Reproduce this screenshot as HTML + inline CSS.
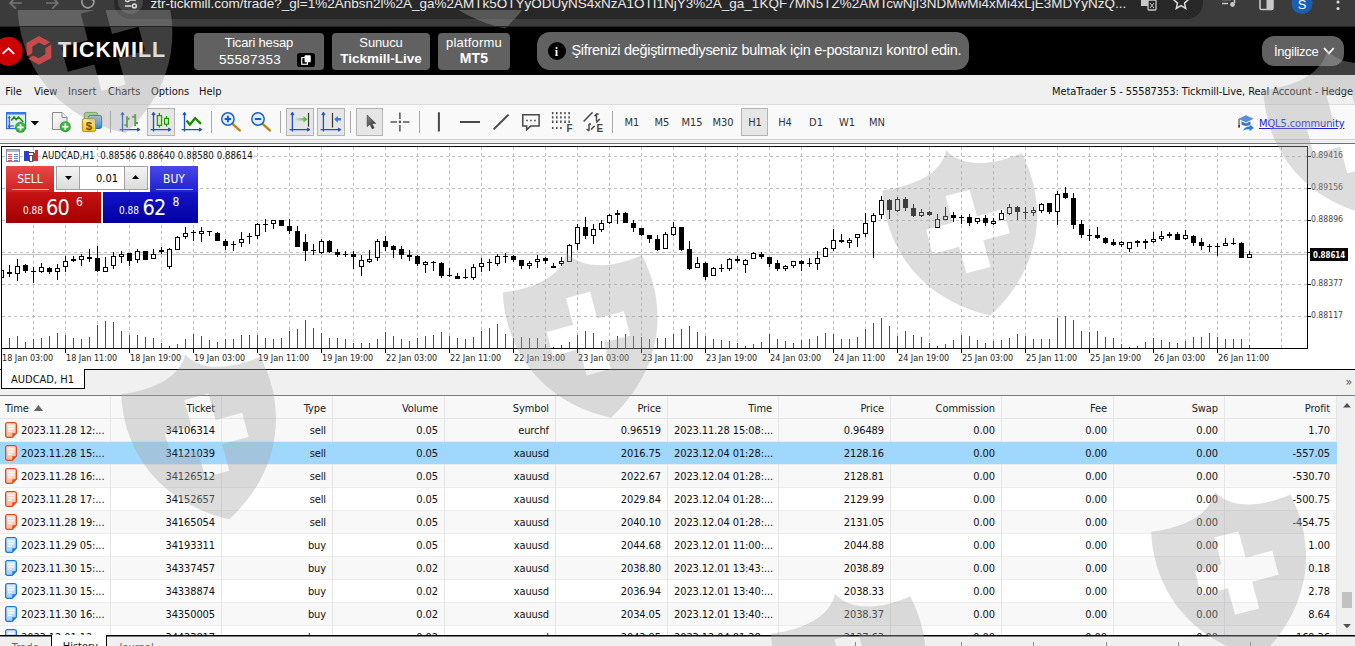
<!DOCTYPE html><html><head><meta charset="utf-8"><title>Tickmill MetaTrader 5</title><style>
*{box-sizing:border-box}
html,body{margin:0;padding:0}
body{width:1355px;height:646px;overflow:hidden;position:relative;background:#fff;font-family:'DejaVu Sans Condensed','Liberation Sans',sans-serif;font-size:11px;color:#000}
.abs{position:absolute}
.t{position:absolute;white-space:nowrap;line-height:1}
#chrome{left:0;top:0;width:1355px;height:26px;background:#3b3b3b;overflow:hidden}
#url{left:114px;top:-14px;width:1089px;height:33px;border-radius:17px;background:#282828}
#hdr{left:0;top:26px;width:1355px;height:49px;background:#000;font-family:'Liberation Sans',sans-serif;color:#fff}
.hbox{position:absolute;top:7px;height:37px;background:#616161;border-radius:4px;text-align:center;color:#fff}
.hbox div{position:absolute;left:0;right:0;white-space:nowrap;line-height:1}
#menu{left:0;top:75px;width:1355px;height:30px;background:#f0f0f0;border-bottom:1px solid #dcdcdc}
#tb{left:0;top:105px;width:1355px;height:35px;background:#f9f9f9;border-bottom:1px solid #d0d0d0}
.sep{position:absolute;top:6px;width:1px;height:22px;background:#a8a8a8}
.btnsel{position:absolute;top:3px;height:28px;background:#e6e6e6;border:1px solid #b4b4b4}
.tf{position:absolute;top:0;height:35px;line-height:35px;text-align:center;font-size:11px;color:#333}
</style></head><body>
<div id="chrome" class="abs">
<div id="url" class="abs"></div>
<div class="abs" style="left:118px;top:-11px;width:25.4px;height:25.4px;border-radius:13px;background:#454545"></div>
<svg class="abs" style="left:0;top:0" width="1355" height="26" viewBox="0 0 1355 26"><g fill="none" stroke="#757575" stroke-width="1.7"><path d="M15.8 -2.8 L10.2 3 L15.8 8.6 M10.6 3 H21.8"/><path d="M52.2 -2.8 L57.8 3 L52.2 8.6 M57.4 3 H46"/><path d="M93.6 0 A6 6 0 1 1 88 -4.2" stroke="#9a9a9a"/></g><path d="M90.6 -0.6 h3.600 v-3.400 z M90.600 -0.600 h3.600 v3.200 z" fill="#9a9a9a"/><g stroke="#dcdcdc" stroke-width="1.5" fill="none"><path d="M130 0 h6 M125 5.9 h6.4"/><circle cx="127.4" cy="-0.2" r="1.9"/><circle cx="134.4" cy="5.9" r="1.9"/></g><g><rect x="1141" y="-4" width="9" height="10" fill="#c8c8c8"/><rect x="1148" y="0" width="8" height="10" rx="1" fill="#282828" stroke="#c8c8c8" stroke-width="1.3"/><path d="M1150 3 l4 5 M1154 3 l-4 5" stroke="#c8c8c8" stroke-width="1"/></g><path d="M1181 -6 l2.2 5 5.3 .5 -4 3.6 1.2 5.3 -4.7 -2.8 -4.7 2.8 1.2 -5.3 -4 -3.6 5.3 -.5z" fill="none" stroke="#dcdcdc" stroke-width="1.5"/><g stroke="#c8c8c8" stroke-width="1.6" fill="none"><path d="M1222 -0.5 h9 M1222 3.5 h6"/><path d="M1234.5 -6 v9"/></g><circle cx="1232.5" cy="4.5" r="2.4" fill="#c8c8c8"/><g><rect x="1260" y="-6" width="13" height="15.5" rx="1.5" fill="none" stroke="#c8c8c8" stroke-width="1.6"/><rect x="1266.5" y="-6" width="6.5" height="15" fill="#c8c8c8"/></g><circle cx="1302" cy="3.5" r="10.5" fill="#1a5fb4"/><circle cx="1338" cy="2" r="1.5" fill="#dcdcdc"/><circle cx="1338" cy="8.5" r="1.5" fill="#dcdcdc"/></svg>
<div class="t" style="left:150.5px;top:-4.4px;font:13.5px 'Liberation Sans',sans-serif;color:#e8e8e8;letter-spacing:0px" id="urltext">ztr-tickmill.com/trade?_gl=1%2Anbsn2l%2A_ga%2AMTk5OTYyODUyNS4xNzA1OTI1NjY3%2A_ga_1KQF7MN5TZ%2AMTcwNjI3NDMwMi4xMi4xLjE3MDYyNzQ...</div>
<div class="t" style="left:1297px;top:-3px;width:10px;text-align:center;font:13px 'Liberation Sans',sans-serif;color:#fff">S</div>
</div>
<div class="abs" style="left:0;top:26px;width:1355px;height:1px;background:#242424;z-index:2"></div>
<div id="hdr" class="abs">
<svg class="abs" style="left:0;top:0" width="190" height="49" viewBox="0 26 190 49"><circle cx="8.2" cy="51.3" r="14.5" fill="#cc0000"/><path d="M2.6 53.9 L8.45 48.3 L14.1 53.9" fill="none" stroke="#fff" stroke-width="1.9"/><g fill="#dc1616"><path d="M26.6 43 L38.9 36 L50.2 42.3 L44.6 45.6 L38.9 42.6 L32.3 46.6 V53.3 L26.6 56.6 Z"/><path d="M51.3 44.6 V58 L38.9 64.8 L28 58.7 L33.2 55.4 L38.9 58.2 L45.4 54.3 V47.9 Z"/></g></svg>
<div class="t" style="left:58px;top:12.4px;font:bold 21.4px 'Liberation Sans',sans-serif;letter-spacing:1.05px;color:#fff" id="tickmill">TICKMILL</div>
<div class="hbox" style="left:194px;width:130px"><div style="top:3.4px;font-size:13px;letter-spacing:-0.17px" id="th">Ticari hesap</div><div style="top:20.2px;font-size:13.5px;letter-spacing:0.25px;left:25px;right:auto" id="acc">55587353</div><svg class="abs" style="left:103px;top:19px" width="18" height="16" viewBox="0 0 19 15"><rect width="19" height="15" rx="3" fill="#000"/><rect x="5" y="5" width="6" height="7" fill="none" stroke="#fff" stroke-width="1.2"/><rect x="8" y="2.5" width="6.5" height="7.5" rx="1" fill="#fff"/></svg></div>
<div class="hbox" style="left:332px;width:98px"><div style="top:2.6px;font-size:13px;letter-spacing:-0.13px" id="sun">Sunucu</div><div style="top:18.6px;font-size:13.5px;font-weight:bold" id="tl">Tickmill-Live</div></div>
<div class="hbox" style="left:438px;width:72px"><div style="top:2.6px;font-size:13px;letter-spacing:0.18px" id="plat">platformu</div><div style="top:18.2px;font-size:14px;font-weight:bold;letter-spacing:0.2px" id="mt5">MT5</div></div>
<div class="abs" style="left:537px;top:6px;width:432px;height:38px;border-radius:13px;background:#616161"></div>
<div class="abs" style="left:547.5px;top:16px;width:18px;height:18px;border-radius:9px;background:#000"></div>
<div class="t" style="left:547.5px;top:19px;width:18px;text-align:center;font:bold 12px 'Liberation Serif',serif;color:#fff">i</div>
<div class="t" style="left:571.5px;top:17.2px;font-size:14.5px;letter-spacing:-0.31px;color:#fff" id="msg">Şifrenizi değiştirmediyseniz bulmak için e-postanızı kontrol edin.</div>
<div class="abs" style="left:1262px;top:10px;width:82px;height:30px;border-radius:12px;background:#616161"></div>
<div class="t" style="left:1274px;top:18.9px;font-size:13px;letter-spacing:-0.27px;color:#fff" id="lang">İngilizce</div>
<svg class="abs" style="left:1323px;top:19.5px" width="12" height="10" viewBox="0 0 12 10"><path d="M1 2 L6 7.3 L10.7 2" fill="none" stroke="#fff" stroke-width="1.8"/></svg>
</div>
<div id="menu" class="abs">
<div class="t" style="left:5.3px;top:11px;font-size:11px;color:#111">File</div>
<div class="t" style="left:34px;top:11px;font-size:11px;color:#111">View</div>
<div class="t" style="left:68px;top:11px;font-size:11px;color:#111">Insert</div>
<div class="t" style="left:108px;top:11px;font-size:11px;color:#111">Charts</div>
<div class="t" style="left:151px;top:11px;font-size:11px;color:#111">Options</div>
<div class="t" style="left:199px;top:11px;font-size:11px;color:#111">Help</div>
<div class="t" style="right:2px;top:11px;font-size:11px;color:#111;letter-spacing:-0.08px" id="mt">MetaTrader 5 - 55587353: Tickmill-Live, Real Account - Hedge</div>
</div>
<div id="tb" class="abs">
<div class="sep" style="left:110px"></div>
<div class="sep" style="left:211px"></div>
<div class="sep" style="left:280px"></div>
<div class="sep" style="left:350px"></div>
<div class="sep" style="left:419px"></div>
<div class="sep" style="left:612px"></div>
<div class="btnsel" style="left:147px;width:28px"></div>
<div class="btnsel" style="left:286px;width:28px"></div>
<div class="btnsel" style="left:317px;width:28px"></div>
<div class="btnsel" style="left:356px;width:27px"></div>
<div class="btnsel" style="left:741px;width:27px"></div>
<div class="tf" style="left:612px;width:40px">M1</div>
<div class="tf" style="left:642px;width:40px">M5</div>
<div class="tf" style="left:672px;width:40px">M15</div>
<div class="tf" style="left:703px;width:40px">M30</div>
<div class="tf" style="left:735px;width:40px">H1</div>
<div class="tf" style="left:765px;width:40px">H4</div>
<div class="tf" style="left:796px;width:40px">D1</div>
<div class="tf" style="left:827px;width:40px">W1</div>
<div class="tf" style="left:857px;width:40px">MN</div>
<svg class="abs" style="left:0;top:0" width="1355" height="35" viewBox="0 105 1355 35" font-family="'Liberation Sans',sans-serif"><rect x="6.6" y="112.6" width="19" height="16" fill="#deebf9" stroke="#2a6fd6" stroke-width="1.2"/><rect x="6.6" y="112.3" width="19" height="2.2" fill="#3b7be0"/><path d="M9.3 117V127.5M8 126h6" stroke="#1a50c8" stroke-width="1.1" fill="none"/><path d="M9.3 115.8l-1.4 2h2.8z M9.3 128.6l-1.4-2h2.8z" fill="#1a50c8"/><path d="M11.3 120.5L14 117l2.2 2.6L18.6 117l4.6 5" stroke="#1a9000" stroke-width="1.5" fill="none"/><circle cx="20.5" cy="127.3" r="5.5" fill="#2aa52a"/><circle cx="20.5" cy="126.8" r="4.6" fill="#4cc04c" opacity=".6"/><path d="M17.3 127.3h6.4M20.5 124.1v6.4" stroke="#fff" stroke-width="1.7"/><path d="M30.8 121h8.2l-4.1 4.4z" fill="#000"/><defs><linearGradient id="pg" x1="0" y1="0" x2="1" y2="1"><stop offset="0" stop-color="#fff"/><stop offset="1" stop-color="#dcdcdc"/></linearGradient></defs><path d="M52.5 112.5h9.5l5 5v12h-14.5z" fill="url(#pg)" stroke="#8a8a8a" stroke-width="1"/><path d="M62 112.5v5h5" fill="#f4f4f4" stroke="#8a8a8a" stroke-width="1"/><circle cx="65.3" cy="126.7" r="5.5" fill="#2aa52a"/><circle cx="65.3" cy="126.2" r="4.6" fill="#4cc04c" opacity=".6"/><path d="M62.1 126.7h6.4M65.3 123.5v6.4" stroke="#fff" stroke-width="1.7"/><rect x="84.3" y="112.4" width="13.2" height="12" rx="2" fill="#b5d8a6" stroke="#4aa83a" stroke-width="1"/><defs><linearGradient id="bl" x1="0" y1="0" x2="0" y2="1"><stop offset="0" stop-color="#a8c4ea"/><stop offset="1" stop-color="#1e8ff0"/></linearGradient><linearGradient id="yl" x1="0" y1="0" x2="0" y2="1"><stop offset="0" stop-color="#fbe9a0"/><stop offset="1" stop-color="#f2c21a"/></linearGradient></defs><rect x="88.4" y="115.4" width="13.2" height="13" rx="2" fill="url(#bl)" stroke="#1e5fc0" stroke-width="1"/><rect x="82.4" y="118.6" width="13.2" height="13" rx="2" fill="url(#yl)" stroke="#b08a10" stroke-width="1"/><text x="89" y="129.6" font-size="11.5" font-weight="bold" text-anchor="middle" fill="#6b4e00">$</text><g stroke="#1a50c8" stroke-width="1.3" fill="#1a50c8"><path d="M122.5 131.6V114.1 M119.7 129.6H138.5" fill="none"/><path d="M122.5 112.1l-1.6 2.6h3.2z M140.1 129.6l-2.6-1.6v3.2z" stroke-width="0.8"/></g><path d="M127 116.2V127.6M124.2 125.1h2.8M127 118.8h2.6 M135.2 114V126.2M132.2 116.7h3M135.2 123h2.8" stroke="#4a9c30" stroke-width="1.9" fill="none"/><g stroke="#1a50c8" stroke-width="1.3" fill="#1a50c8"><path d="M153.5 131.6V114.1 M150.7 129.6H169.5" fill="none"/><path d="M153.5 112.1l-1.6 2.6h3.2z M171.1 129.6l-2.6-1.6v3.2z" stroke-width="0.8"/></g><path d="M159.4 113V127.6M166.5 116V126.6" stroke="#1a9000" stroke-width="1.2"/><rect x="157.3" y="115.6" width="4.3" height="9.8" fill="#c4efb4" stroke="#1a9000" stroke-width="1.1"/><rect x="164.5" y="118.4" width="4" height="5.8" fill="#c4efb4" stroke="#1a9000" stroke-width="1.1"/><g stroke="#1a50c8" stroke-width="1.3" fill="#1a50c8"><path d="M184.5 131.6V114.1 M181.7 129.6H200.5" fill="none"/><path d="M184.5 112.1l-1.6 2.6h3.2z M202.1 129.6l-2.6-1.6v3.2z" stroke-width="0.8"/></g><path d="M186.6 120.6l3.2 4 5.4-6.4 5.8 5.6" stroke="#1a9000" stroke-width="2.4" fill="none"/><path d="M233.1 124.4l6.6 6" stroke="#b48a1c" stroke-width="2.6" stroke-linecap="round"/><circle cx="227.9" cy="119" r="6.2" fill="#e2f0fc" stroke="#1e63c8" stroke-width="1.5"/><path d="M224.7 119h6.4M227.9 115.8v6.4" stroke="#1a50c8" stroke-width="1.9"/><path d="M263.2 124.4l6.6 6" stroke="#b48a1c" stroke-width="2.6" stroke-linecap="round"/><circle cx="258.0" cy="119" r="6.2" fill="#e2f0fc" stroke="#1e63c8" stroke-width="1.5"/><path d="M254.8 119h6.4" stroke="#1a50c8" stroke-width="1.9"/><g stroke="#1a50c8" stroke-width="1.3" fill="#1a50c8"><path d="M292.4 131.6V114.1 M289.6 129.6H308.4" fill="none"/><path d="M292.4 112.1l-1.6 2.6h3.2z M310.0 129.6l-2.6-1.6v3.2z" stroke-width="0.8"/></g><defs><linearGradient id="ga"><stop offset="0" stop-color="#6cc84a" stop-opacity=".15"/><stop offset="1" stop-color="#3aa81a"/></linearGradient></defs><path d="M295 118.1h8.5v-2.2l3.8 3.4-3.8 3.4v-2.2h-8.5z" fill="url(#ga)"/><path d="M308.5 113V126.6" stroke="#333" stroke-width="1.2"/><g stroke="#1a50c8" stroke-width="1.3" fill="#1a50c8"><path d="M323.4 131.6V114.1 M320.6 129.6H339.4" fill="none"/><path d="M323.4 112.1l-1.6 2.6h3.2z M341.0 129.6l-2.6-1.6v3.2z" stroke-width="0.8"/></g><path d="M332.5 113V127.6" stroke="#333" stroke-width="1.2"/><path d="M341 118.1h-3.2v-2.2l-3.6 3.4 3.6 3.4v-2.2h3.2z" fill="#3b7be0"/><defs><linearGradient id="cg" x1="0" y1="0" x2="1" y2="1"><stop offset="0" stop-color="#8a8a8a"/><stop offset="1" stop-color="#2a2a2a"/></linearGradient></defs><path d="M367.2 115v11.6l2.8-2.4 2.2 4.6 1.9-.9-2.2-4.5h3.8z" fill="url(#cg)" stroke="#333" stroke-width=".6"/><path d="M390.5 121.9h6.4M403 121.9h6.4M399.9 112.5v6.4M399.9 125v6.4" stroke="#555" stroke-width="1.5"/><circle cx="399.9" cy="121.9" r="1.3" fill="#555"/><path d="M438.9 112.2V131.6M460 121.9H480M493.6 129.4L508.6 114.6" stroke="#484848" stroke-width="2"/><path d="M522.8 114.8h16.3v11.3h-8.4l-4 3.7v-3.7h-3.9z" fill="none" stroke="#484848" stroke-width="1.5"/><path d="M526.2 120.5h1.6M530.2 120.5h1.6M534.2 120.5h1.6" stroke="#484848" stroke-width="1.6"/><path d="M552.7 112v2.2M552.7 116.2v2.4M552.7 120.6v2.4" stroke="#484848" stroke-width="1.5"/><path d="M556.8 112v2.2M556.8 116.2v2.4M556.8 120.6v2.4" stroke="#484848" stroke-width="1.5"/><path d="M560.9 112v2.2M560.9 116.2v2.4M560.9 120.6v2.4" stroke="#484848" stroke-width="1.5"/><path d="M565.0 112v2.2M565.0 116.2v2.4M565.0 120.6v2.4" stroke="#484848" stroke-width="1.5"/><path d="M569.1 112v2.2M569.1 116.2v2.4M569.1 120.6v2.4" stroke="#484848" stroke-width="1.5"/><path d="M552.7 127v2" stroke="#484848" stroke-width="1.5"/><path d="M556.8 127v2" stroke="#484848" stroke-width="1.5"/><path d="M560.9 127v2" stroke="#484848" stroke-width="1.5"/><text x="566.6" y="131.6" font-size="10" font-weight="bold" fill="#484848">F</text><path d="M583.6 121.5L592.6 112.2M591 129.5l3.6-3.6M596.2 122.6l3.6-3.6" stroke="#484848" stroke-width="1.5"/><path d="M596.5 114v7M594.5 116.2l2-2.2h2.2 M589 124v7M586.5 129l2.5 2 M589 124h2" stroke="#484848" stroke-width="1.4" fill="none"/><text x="596.6" y="131.6" font-size="10" font-weight="bold" fill="#484848">E</text><path d="M1246 115.2l7.6 3.6-7.6 3.6-7.6-3.6z" fill="#5a8fd6"/><path d="M1241.5 121.2v3.4c2.6 1.8 6.4 1.8 9 0v-3.4l-4.5 2.2z" fill="#3f73c4"/><path d="M1239 119v6.6" stroke="#333" stroke-width="1"/><rect x="1238.2" y="125" width="1.7" height="2.6" fill="#333"/><path d="M1243 130.6c1.2-3 3.6-4.2 6.6-4.2v-2l4.2 3.4-4.2 3.4v-2c-2.6 0-4.6.2-6.600 1.400z" fill="#2a7be0"/></svg>
<div class="t" style="left:1259px;top:13px;font-size:11px;letter-spacing:-0.12px;color:#1a1ae0;text-decoration:underline" id="mql">MQL5.community</div>
</div>
<div class="abs" style="left:0;top:140px;width:1355px;height:3px;background:#f0f0f0"></div>
<div class="abs" style="left:0;top:143px;width:1355px;height:1px;background:#707070"></div>
<div class="abs" style="left:0;top:144px;width:1355px;height:2px;background:#fff"></div>
<svg class="abs" style="left:0;top:146px" width="1355" height="224" viewBox="0 146 1355 224" shape-rendering="crispEdges" font-family="'DejaVu Sans Condensed','Liberation Sans',sans-serif"><rect x="0" y="146" width="1355" height="224" fill="#fff"/><path d="M33.5 147V348M65.5 147V348M97.5 147V348M129.5 147V348M161.5 147V348M193.5 147V348M225.5 147V348M257.5 147V348M289.5 147V348M321.5 147V348M353.5 147V348M385.5 147V348M417.5 147V348M449.5 147V348M481.5 147V348M513.5 147V348M545.5 147V348M577.5 147V348M609.5 147V348M641.5 147V348M673.5 147V348M705.5 147V348M737.5 147V348M769.5 147V348M801.5 147V348M833.5 147V348M865.5 147V348M897.5 147V348M929.5 147V348M961.5 147V348M993.5 147V348M1025.5 147V348M1057.5 147V348M1089.5 147V348M1121.5 147V348M1153.5 147V348M1185.5 147V348M1217.5 147V348M1249.5 147V348M1281.5 147V348M2 156.5H1307M2 188.5H1307M2 220.5H1307M2 252.5H1307M2 284.5H1307M2 316.5H1307" stroke="#c0c0c0" stroke-width="1" stroke-dasharray="3 3" fill="none"/><rect x="2" y="254" width="1306" height="1" fill="#c0c0c0"/><path d="M9.5 338V348M17.5 336V348M25.5 342V348M33.5 339V348M41.5 338V348M49.5 336V348M57.5 333V348M65.5 335V348M73.5 338V348M81.5 339V348M89.5 337V348M97.5 325V348M105.5 321V348M113.5 322V348M121.5 331V348M129.5 335V348M137.5 335V348M145.5 337V348M153.5 338V348M161.5 343V348M169.5 346V348M177.5 344V348M185.5 339V348M193.5 334V348M201.5 336V348M209.5 340V348M217.5 342V348M225.5 339V348M233.5 339V348M241.5 335V348M249.5 335V348M257.5 335V348M265.5 338V348M273.5 339V348M281.5 338V348M289.5 331V348M297.5 329V348M305.5 320V348M313.5 328V348M321.5 333V348M329.5 338V348M337.5 338V348M345.5 339V348M353.5 343V348M361.5 343V348M369.5 343V348M377.5 339V348M385.5 332V348M393.5 336V348M401.5 339V348M409.5 341V348M417.5 338V348M425.5 336V348M433.5 335V348M441.5 332V348M449.5 336V348M457.5 338V348M465.5 339V348M473.5 337V348M481.5 331V348M489.5 328V348M497.5 324V348M505.5 334V348M513.5 338V348M521.5 337V348M529.5 338V348M537.5 338V348M545.5 344V348M553.5 347V348M561.5 345V348M569.5 342V348M577.5 335V348M585.5 331V348M593.5 333V348M601.5 341V348M609.5 340V348M617.5 336V348M625.5 334V348M633.5 336V348M641.5 337V348M649.5 339V348M657.5 338V348M665.5 338V348M673.5 334V348M681.5 329V348M689.5 326V348M697.5 332V348M705.5 336V348M713.5 339V348M721.5 340V348M729.5 341V348M737.5 343V348M745.5 346V348M753.5 344V348M761.5 342V348M769.5 334V348M777.5 339V348M785.5 341V348M793.5 343V348M801.5 340V348M809.5 339V348M817.5 336V348M825.5 333V348M833.5 334V348M841.5 339V348M849.5 339V348M857.5 337V348M865.5 329V348M873.5 323V348M881.5 318V348M889.5 326V348M897.5 336V348M905.5 331V348M913.5 335V348M921.5 337V348M929.5 343V348M937.5 346V348M945.5 344V348M953.5 340V348M961.5 335V348M969.5 336V348M977.5 340V348M985.5 343V348M993.5 341V348M1001.5 340V348M1009.5 338V348M1017.5 334V348M1025.5 336V348M1033.5 339V348M1041.5 339V348M1049.5 339V348M1057.5 318V348M1065.5 316V348M1073.5 320V348M1081.5 331V348M1089.5 332V348M1097.5 331V348M1105.5 337V348M1113.5 338V348M1121.5 344V348M1129.5 347V348M1137.5 346V348M1145.5 342V348M1153.5 338V348M1161.5 340V348M1169.5 342V348M1177.5 343V348M1185.5 341V348M1193.5 337V348M1201.5 337V348M1209.5 333V348M1217.5 337V348M1225.5 339V348M1233.5 339V348M1241.5 339V348M1249.5 345V348" stroke="#008000" stroke-width="1" fill="none"/><path d="M1.5 270V278M9.5 265V277M17.5 259V281M25.5 264V273M33.5 267V283M41.5 263V273M49.5 267V274M57.5 264V280M65.5 256V272M73.5 256V262M81.5 254V266M89.5 249V262M97.5 246V272M105.5 257V272M113.5 252V269M121.5 251V263M129.5 253V266M137.5 249V263M145.5 251V260M153.5 249V259M161.5 247V254M169.5 248V269M177.5 236V250M185.5 227V239M193.5 230V241M201.5 227V242M209.5 231V236M217.5 232V241M225.5 239V250M233.5 241V251M241.5 232V247M249.5 233V244M257.5 223V239M265.5 219V232M273.5 220V229M281.5 220V226M289.5 219V234M297.5 226V247M305.5 234V261M313.5 244V255M321.5 239V254M329.5 240V253M337.5 249V257M345.5 251V257M353.5 251V269M361.5 255V276M369.5 250V263M377.5 239V261M385.5 236V251M393.5 245V258M401.5 246V259M409.5 250V261M417.5 255V266M425.5 261V273M433.5 261V271M441.5 262V278M449.5 268V277M457.5 273V279M465.5 269V279M473.5 264V280M481.5 258V272M489.5 259V271M497.5 254V266M505.5 253V263M513.5 255V262M521.5 260V269M529.5 261V269M537.5 255V268M545.5 257V264M553.5 263V268M561.5 257V266M569.5 244V262M577.5 224V250M585.5 217V239M593.5 224V244M601.5 220V232M609.5 214V224M617.5 210V224M625.5 212V223M633.5 220V232M641.5 228V236M649.5 235V243M657.5 235V251M665.5 232V249M673.5 222V236M681.5 227V251M689.5 241V270M697.5 257V268M705.5 262V280M713.5 267V276M721.5 264V272M729.5 258V271M737.5 256V263M745.5 259V273M753.5 252V259M761.5 252V259M769.5 257V267M777.5 260V271M785.5 265V271M793.5 261V268M801.5 260V271M809.5 258V267M817.5 251V270M825.5 247V257M833.5 229V251M841.5 234V243M849.5 238V248M857.5 234V247M865.5 213V237M873.5 213V258M881.5 196V219M889.5 199V219M897.5 197V212M905.5 197V211M913.5 204V217M921.5 209V217M929.5 211V216M937.5 214V228M945.5 207V220M953.5 212V222M961.5 215V224M969.5 214V226M977.5 218V224M985.5 215V226M993.5 218V225M1001.5 210V220M1009.5 204V215M1017.5 206V220M1025.5 207V219M1033.5 207V216M1041.5 203V213M1049.5 203V214M1057.5 191V225M1065.5 187V199M1073.5 193V229M1081.5 220V238M1089.5 229V241M1097.5 227V239M1105.5 237V244M1113.5 239V246M1121.5 241V247M1129.5 242V252M1137.5 240V247M1145.5 239V249M1153.5 232V243M1161.5 231V241M1169.5 232V238M1177.5 232V240M1185.5 230V240M1193.5 235V246M1201.5 238V250M1209.5 244V252M1217.5 243V256M1225.5 238V246M1233.5 238V245M1241.5 242V258M1249.5 251V258" stroke="#000" stroke-width="1" fill="none"/><path d="M-1 270h5v8h-5zM7 272h5v2h-5zM15 266h5v8h-5zM23 265h5v6h-5zM31 271h5v1h-5zM39 267h5v5h-5zM47 268h5v4h-5zM55 268h5v4h-5zM63 261h5v6h-5zM71 259h5v2h-5zM79 256h5v4h-5zM87 257h5v2h-5zM95 258h5v13h-5zM103 267h5v5h-5zM111 256h5v10h-5zM119 254h5v3h-5zM127 253h5v8h-5zM135 251h5v9h-5zM143 251h5v9h-5zM151 254h5v5h-5zM159 250h5v2h-5zM167 249h5v18h-5zM175 237h5v13h-5zM183 233h5v4h-5zM191 232h5v1h-5zM199 231h5v3h-5zM207 231h5v1h-5zM215 233h5v8h-5zM223 241h5v5h-5zM231 244h5v1h-5zM239 239h5v4h-5zM247 236h5v1h-5zM255 224h5v12h-5zM263 224h5v1h-5zM271 220h5v4h-5zM279 220h5v6h-5zM287 226h5v5h-5zM295 231h5v16h-5zM303 242h5v9h-5zM311 250h5v1h-5zM319 241h5v12h-5zM327 241h5v11h-5zM335 252h5v3h-5zM343 254h5v1h-5zM351 254h5v3h-5zM359 260h5v7h-5zM367 259h5v3h-5zM375 241h5v17h-5zM383 241h5v6h-5zM391 246h5v4h-5zM399 249h5v6h-5zM407 255h5v2h-5zM415 256h5v8h-5zM423 262h5v3h-5zM431 262h5v1h-5zM439 263h5v13h-5zM447 275h5v1h-5zM455 276h5v3h-5zM463 277h5v1h-5zM471 267h5v11h-5zM479 263h5v4h-5zM487 262h5v1h-5zM495 256h5v8h-5zM503 256h5v1h-5zM511 256h5v4h-5zM519 260h5v6h-5zM527 263h5v3h-5zM535 259h5v3h-5zM543 258h5v3h-5zM551 266h5v2h-5zM559 261h5v3h-5zM567 245h5v17h-5zM575 227h5v17h-5zM583 227h5v9h-5zM591 229h5v7h-5zM599 223h5v7h-5zM607 215h5v8h-5zM615 213h5v2h-5zM623 213h5v10h-5zM631 223h5v5h-5zM639 228h5v7h-5zM647 235h5v4h-5zM655 239h5v11h-5zM663 234h5v15h-5zM671 227h5v8h-5zM679 227h5v23h-5zM687 249h5v20h-5zM695 263h5v5h-5zM703 263h5v14h-5zM711 268h5v8h-5zM719 268h5v1h-5zM727 259h5v10h-5zM735 259h5v2h-5zM743 260h5v5h-5zM751 253h5v6h-5zM759 254h5v3h-5zM767 257h5v7h-5zM775 263h5v6h-5zM783 266h5v3h-5zM791 261h5v5h-5zM799 261h5v3h-5zM807 263h5v1h-5zM815 258h5v6h-5zM823 248h5v9h-5zM831 240h5v9h-5zM839 240h5v2h-5zM847 240h5v3h-5zM855 234h5v4h-5zM863 223h5v11h-5zM871 215h5v7h-5zM879 200h5v15h-5zM887 200h5v10h-5zM895 199h5v12h-5zM903 199h5v9h-5zM911 208h5v8h-5zM919 212h5v4h-5zM927 212h5v3h-5zM935 219h5v9h-5zM943 216h5v4h-5zM951 215h5v3h-5zM959 217h5v1h-5zM967 217h5v6h-5zM975 218h5v4h-5zM983 218h5v5h-5zM991 221h5v3h-5zM999 213h5v7h-5zM1007 207h5v7h-5zM1015 207h5v5h-5zM1023 212h5v1h-5zM1031 210h5v3h-5zM1039 204h5v7h-5zM1047 203h5v9h-5zM1055 194h5v18h-5zM1063 193h5v5h-5zM1071 198h5v27h-5zM1079 224h5v11h-5zM1087 235h5v1h-5zM1095 235h5v3h-5zM1103 238h5v5h-5zM1111 242h5v3h-5zM1119 242h5v3h-5zM1127 242h5v7h-5zM1135 241h5v2h-5zM1143 241h5v2h-5zM1151 239h5v3h-5zM1159 236h5v3h-5zM1167 234h5v2h-5zM1175 234h5v6h-5zM1183 235h5v4h-5zM1191 236h5v7h-5zM1199 242h5v4h-5zM1207 246h5v1h-5zM1215 246h5v1h-5zM1223 243h5v3h-5zM1231 243h5v1h-5zM1239 243h5v15h-5zM1247 254h5v4h-5z" fill="#000"/><path d="M0 271h3v6h-3zM16 267h3v6h-3zM40 268h3v3h-3zM56 269h3v2h-3zM64 262h3v4h-3zM80 257h3v2h-3zM104 268h3v3h-3zM112 257h3v8h-3zM120 255h3v1h-3zM136 252h3v7h-3zM152 255h3v3h-3zM168 250h3v16h-3zM176 238h3v11h-3zM184 234h3v2h-3zM200 232h3v1h-3zM240 240h3v2h-3zM256 225h3v10h-3zM272 221h3v2h-3zM320 242h3v10h-3zM360 261h3v5h-3zM368 260h3v1h-3zM376 242h3v15h-3zM424 263h3v1h-3zM472 268h3v9h-3zM480 264h3v2h-3zM496 257h3v6h-3zM528 264h3v1h-3zM536 260h3v1h-3zM560 262h3v1h-3zM568 246h3v15h-3zM576 228h3v15h-3zM592 230h3v5h-3zM600 224h3v5h-3zM608 216h3v6h-3zM664 235h3v13h-3zM672 228h3v6h-3zM696 264h3v3h-3zM712 269h3v6h-3zM728 260h3v8h-3zM744 261h3v3h-3zM752 254h3v4h-3zM784 267h3v1h-3zM792 262h3v3h-3zM816 259h3v4h-3zM824 249h3v7h-3zM832 241h3v7h-3zM848 241h3v1h-3zM856 235h3v2h-3zM864 224h3v9h-3zM872 216h3v5h-3zM880 201h3v13h-3zM896 200h3v10h-3zM920 213h3v2h-3zM936 220h3v7h-3zM944 217h3v2h-3zM976 219h3v2h-3zM992 222h3v1h-3zM1000 214h3v5h-3zM1008 208h3v5h-3zM1032 211h3v1h-3zM1040 205h3v5h-3zM1056 195h3v16h-3zM1120 243h3v1h-3zM1128 243h3v5h-3zM1152 240h3v1h-3zM1160 237h3v1h-3zM1184 236h3v2h-3zM1224 244h3v1h-3zM1248 255h3v2h-3z" fill="#fff"/><rect x="0" y="147" width="1" height="223" fill="#fff"/><path d="M1.5 370V146.5H1307.5V348.5H1.5" stroke="#000" fill="none"/><rect x="1308" y="156" width="3" height="1" fill="#000"/><text x="1311" y="158.2" font-size="8.6" fill="#444">0.89416</text><rect x="1308" y="188" width="3" height="1" fill="#000"/><text x="1311" y="190.2" font-size="8.6" fill="#444">0.89156</text><rect x="1308" y="220" width="3" height="1" fill="#000"/><text x="1311" y="222.2" font-size="8.6" fill="#444">0.88896</text><rect x="1308" y="284" width="3" height="1" fill="#000"/><text x="1311" y="286.2" font-size="8.6" fill="#444">0.88377</text><rect x="1308" y="316" width="3" height="1" fill="#000"/><text x="1311" y="318.2" font-size="8.6" fill="#444">0.88117</text><rect x="1310" y="248" width="38" height="13" fill="#000"/><rect x="1308" y="252" width="3" height="1" fill="#000"/><text x="1313" y="258" font-size="9" font-weight="bold" fill="#fff" textLength="32.2" lengthAdjust="spacingAndGlyphs">0.88614</text><rect x="1" y="348" width="1" height="5" fill="#000"/><text x="2" y="361" font-size="9" fill="#222">18 Jan 03:00</text><rect x="65" y="348" width="1" height="5" fill="#000"/><text x="66" y="361" font-size="9" fill="#222">18 Jan 11:00</text><rect x="129" y="348" width="1" height="5" fill="#000"/><text x="130" y="361" font-size="9" fill="#222">18 Jan 19:00</text><rect x="193" y="348" width="1" height="5" fill="#000"/><text x="194" y="361" font-size="9" fill="#222">19 Jan 03:00</text><rect x="257" y="348" width="1" height="5" fill="#000"/><text x="258" y="361" font-size="9" fill="#222">19 Jan 11:00</text><rect x="321" y="348" width="1" height="5" fill="#000"/><text x="322" y="361" font-size="9" fill="#222">19 Jan 19:00</text><rect x="385" y="348" width="1" height="5" fill="#000"/><text x="386" y="361" font-size="9" fill="#222">22 Jan 03:00</text><rect x="449" y="348" width="1" height="5" fill="#000"/><text x="450" y="361" font-size="9" fill="#222">22 Jan 11:00</text><rect x="513" y="348" width="1" height="5" fill="#000"/><text x="514" y="361" font-size="9" fill="#222">22 Jan 19:00</text><rect x="577" y="348" width="1" height="5" fill="#000"/><text x="578" y="361" font-size="9" fill="#222">23 Jan 03:00</text><rect x="641" y="348" width="1" height="5" fill="#000"/><text x="642" y="361" font-size="9" fill="#222">23 Jan 11:00</text><rect x="705" y="348" width="1" height="5" fill="#000"/><text x="706" y="361" font-size="9" fill="#222">23 Jan 19:00</text><rect x="769" y="348" width="1" height="5" fill="#000"/><text x="770" y="361" font-size="9" fill="#222">24 Jan 03:00</text><rect x="833" y="348" width="1" height="5" fill="#000"/><text x="834" y="361" font-size="9" fill="#222">24 Jan 11:00</text><rect x="897" y="348" width="1" height="5" fill="#000"/><text x="898" y="361" font-size="9" fill="#222">24 Jan 19:00</text><rect x="961" y="348" width="1" height="5" fill="#000"/><text x="962" y="361" font-size="9" fill="#222">25 Jan 03:00</text><rect x="1025" y="348" width="1" height="5" fill="#000"/><text x="1026" y="361" font-size="9" fill="#222">25 Jan 11:00</text><rect x="1089" y="348" width="1" height="5" fill="#000"/><text x="1090" y="361" font-size="9" fill="#222">25 Jan 19:00</text><rect x="1153" y="348" width="1" height="5" fill="#000"/><text x="1154" y="361" font-size="9" fill="#222">26 Jan 03:00</text><rect x="1217" y="348" width="1" height="5" fill="#000"/><text x="1218" y="361" font-size="9" fill="#222">26 Jan 11:00</text></svg>
<div class="abs" style="left:6px;top:166px;width:48px;height:27px;background:linear-gradient(#e84848,#d02020)"></div>
<div class="abs" style="left:6px;top:192px;width:95px;height:31px;background:linear-gradient(#c81414,#a00000)"></div>
<div class="abs" style="left:150px;top:166px;width:48px;height:27px;background:linear-gradient(#4848e8,#2020d0)"></div>
<div class="abs" style="left:103px;top:192px;width:95px;height:31px;background:linear-gradient(#1414c8,#0000a0)"></div>
<div class="abs" style="left:12px;top:189px;width:37px;height:1px;background:#f0b0b0"></div>
<div class="abs" style="left:156px;top:189px;width:37px;height:1px;background:#b0b0f0"></div>
<div class="t" style="left:6px;top:173px;width:48px;text-align:center;font-size:12px;color:#fff">SELL</div>
<div class="t" style="left:150px;top:173px;width:48px;text-align:center;font-size:12px;color:#fff">BUY</div>
<div class="abs" style="left:56px;top:166px;width:92px;height:24px;background:#fff;border:1px solid #a0a0a0"></div>
<div class="abs" style="left:57px;top:167px;width:23px;height:22px;background:linear-gradient(#f4f4f4,#dcdcdc);border-right:1px solid #a0a0a0"></div>
<div class="abs" style="left:124px;top:167px;width:23px;height:22px;background:linear-gradient(#f4f4f4,#dcdcdc);border-left:1px solid #a0a0a0"></div>
<svg class="abs" style="left:57px;top:167px" width="90" height="22"><path d="M8 9h7l-3.5 4z M75 12h7l-3.5-4z" fill="#000"/></svg>
<div class="t" style="left:80px;top:173px;width:38px;text-align:right;font-size:11px;color:#000">0.01</div>
<div class="t" style="left:23px;top:206px;font-size:10px;color:#fff">0.88</div>
<div class="t" style="left:46px;top:196.5px;font-size:21.5px;letter-spacing:-0.7px;color:#fff">60</div>
<div class="t" style="left:76px;top:196px;font-size:12px;color:#fff">6</div>
<div class="t" style="left:119px;top:206px;font-size:10px;color:#fff">0.88</div>
<div class="t" style="left:142.5px;top:196.5px;font-size:21.5px;letter-spacing:-0.7px;color:#fff">62</div>
<div class="t" style="left:172.5px;top:196px;font-size:12px;color:#fff">8</div>
<svg class="abs" style="left:6px;top:149px" width="34" height="14" viewBox="0 0 34 14" shape-rendering="crispEdges"><rect x="0.5" y="0.5" width="13" height="12" fill="#fff" stroke="#8090b0"/><rect x="1" y="1" width="12" height="2" fill="#b0b8d0"/><path d="M2 5h4M2 7h4M2 9h4M2 11h4" stroke="#e05050"/><path d="M8 5h4M8 7h4M8 9h4M8 11h4" stroke="#6080e0"/><path d="M18 2h5v10h-5z" fill="#2840d0"/><path d="M23 6h3v6h-3z" fill="#fff" stroke="#555" stroke-width="1"/><path d="M27 4h5v8h-5z M29 1h3v3h-3z" fill="#d03030"/><path d="M22 3h6" stroke="#444"/></svg>
<div class="t" style="left:42px;top:150.5px;font-size:9.6px;letter-spacing:0.05px;color:#111" id="ctitle">AUDCAD,H1&nbsp; 0.88586 0.88640 0.88580 0.88614</div>
<div class="abs" style="left:0;top:370px;width:1355px;height:25px;background:#f0f0f0"></div>
<div class="abs" style="left:0;top:369px;width:1355px;height:1px;background:#000"></div>
<div class="abs" style="left:1px;top:369px;width:84px;height:20px;background:#fff;border:1px solid #000;border-top:none"></div>
<div class="t" style="left:11px;top:374px;font-size:11px;color:#111" id="ctab">AUDCAD, H1</div>
<div class="t" style="left:1345.5px;top:375.5px;font-size:12px;color:#555">»</div>
<div class="abs" style="left:0;top:395px;width:1355px;height:1px;background:#7a7a7a"></div>
<div class="abs" style="left:0;top:396px;width:1337px;height:239px;overflow:hidden;background:#fff;letter-spacing:-0.1px" id="tbl">
<div class="abs" style="left:0;top:0;width:1338px;height:23px;background:#f8f8f8;border-bottom:1px solid #e4e4e4"></div>
<div class="abs" style="left:0;top:23px;width:1338px;height:23px;background:#f8f8f8;border-bottom:1px solid #ececec"></div>
<div class="abs" style="left:0;top:46px;width:1338px;height:23px;background:#a0d7fd;border-bottom:1px solid #ececec"></div>
<div class="abs" style="left:0;top:69px;width:1338px;height:23px;background:#f8f8f8;border-bottom:1px solid #ececec"></div>
<div class="abs" style="left:0;top:92px;width:1338px;height:23px;background:#fff;border-bottom:1px solid #ececec"></div>
<div class="abs" style="left:0;top:115px;width:1338px;height:23px;background:#f8f8f8;border-bottom:1px solid #ececec"></div>
<div class="abs" style="left:0;top:138px;width:1338px;height:23px;background:#fff;border-bottom:1px solid #ececec"></div>
<div class="abs" style="left:0;top:161px;width:1338px;height:23px;background:#f8f8f8;border-bottom:1px solid #ececec"></div>
<div class="abs" style="left:0;top:184px;width:1338px;height:23px;background:#fff;border-bottom:1px solid #ececec"></div>
<div class="abs" style="left:0;top:207px;width:1338px;height:23px;background:#f8f8f8;border-bottom:1px solid #ececec"></div>
<div class="abs" style="left:0;top:230px;width:1338px;height:23px;background:#fff;border-bottom:1px solid #ececec"></div>
<div class="abs" style="left:110px;top:0;width:1px;height:239px;background:#e6e6e6"></div>
<div class="abs" style="left:221px;top:0;width:1px;height:239px;background:#e6e6e6"></div>
<div class="abs" style="left:332px;top:0;width:1px;height:239px;background:#e6e6e6"></div>
<div class="abs" style="left:444px;top:0;width:1px;height:239px;background:#e6e6e6"></div>
<div class="abs" style="left:555px;top:0;width:1px;height:239px;background:#e6e6e6"></div>
<div class="abs" style="left:667px;top:0;width:1px;height:239px;background:#e6e6e6"></div>
<div class="abs" style="left:778px;top:0;width:1px;height:239px;background:#e6e6e6"></div>
<div class="abs" style="left:890px;top:0;width:1px;height:239px;background:#e6e6e6"></div>
<div class="abs" style="left:1001px;top:0;width:1px;height:239px;background:#e6e6e6"></div>
<div class="abs" style="left:1113px;top:0;width:1px;height:239px;background:#e6e6e6"></div>
<div class="abs" style="left:1224px;top:0;width:1px;height:239px;background:#e6e6e6"></div>
<div class="abs" style="left:1336px;top:0;width:1px;height:239px;background:#e6e6e6"></div>
<div class="abs" style="left:0;top:46px;width:1338px;height:22px;background:#a0d7fd"></div>
<div class="t" style="left:5px;top:6.5px;font-size:11px;color:#222">Time</div>
<svg class="abs" style="left:34px;top:9px" width="9" height="6"><path d="M0 6L4.5 0L9 6z" fill="#666"/></svg>
<div class="t" style="left:110px;top:6.5px;width:105px;text-align:right;font-size:11px;color:#222">Ticket</div>
<div class="t" style="left:221px;top:6.5px;width:105px;text-align:right;font-size:11px;color:#222">Type</div>
<div class="t" style="left:332px;top:6.5px;width:106px;text-align:right;font-size:11px;color:#222">Volume</div>
<div class="t" style="left:444px;top:6.5px;width:105px;text-align:right;font-size:11px;color:#222">Symbol</div>
<div class="t" style="left:555px;top:6.5px;width:106px;text-align:right;font-size:11px;color:#222">Price</div>
<div class="t" style="left:667px;top:6.5px;width:105px;text-align:right;font-size:11px;color:#222">Time</div>
<div class="t" style="left:778px;top:6.5px;width:106px;text-align:right;font-size:11px;color:#222">Price</div>
<div class="t" style="left:890px;top:6.5px;width:105px;text-align:right;font-size:11px;color:#222">Commission</div>
<div class="t" style="left:1001px;top:6.5px;width:106px;text-align:right;font-size:11px;color:#222">Fee</div>
<div class="t" style="left:1113px;top:6.5px;width:105px;text-align:right;font-size:11px;color:#222">Swap</div>
<div class="t" style="left:1224px;top:6.5px;width:106px;text-align:right;font-size:11px;color:#222">Profit</div>
<svg class="abs" style="left:5px;top:26px" width="12" height="16" viewBox="0 0 12 16"><defs><linearGradient id="igs" x1="0" y1="0" x2="0" y2="1"><stop offset="0" stop-color="#fde6dc"/><stop offset="1" stop-color="#fbb9a0"/></linearGradient></defs><path d="M2.4 .65h7.2a1.75 1.75 0 0 1 1.75 1.75v8.6l-4.2 4.35h-4.75a1.75 1.75 0 0 1-1.75-1.75v-11.2a1.75 1.75 0 0 1 1.75-1.75z" fill="url(#igs)" stroke="#e2481c" stroke-width="1.3"/><path d="M11.3 11.2l-4 4.1v-4.100z" fill="#e2481c"/><path d="M3 4.4h6M3 6.9h6M3 9.400h3.600" stroke="#fff" stroke-width="1.100"/></svg>
<div class="t" style="left:21px;top:29px;font-size:11px;color:#111">2023.11.28 12:...</div>
<div class="t" style="left:110px;top:29px;width:105px;text-align:right;font-size:11px;color:#111">34106314</div>
<div class="t" style="left:221px;top:29px;width:105px;text-align:right;font-size:11px;color:#111">sell</div>
<div class="t" style="left:332px;top:29px;width:106px;text-align:right;font-size:11px;color:#111">0.05</div>
<div class="t" style="left:444px;top:29px;width:105px;text-align:right;font-size:11px;color:#111">eurchf</div>
<div class="t" style="left:555px;top:29px;width:106px;text-align:right;font-size:11px;color:#111">0.96519</div>
<div class="t" style="left:674px;top:29px;font-size:11px;color:#111">2023.11.28 15:08:...</div>
<div class="t" style="left:778px;top:29px;width:106px;text-align:right;font-size:11px;color:#111">0.96489</div>
<div class="t" style="left:890px;top:29px;width:105px;text-align:right;font-size:11px;color:#111">0.00</div>
<div class="t" style="left:1001px;top:29px;width:106px;text-align:right;font-size:11px;color:#111">0.00</div>
<div class="t" style="left:1113px;top:29px;width:105px;text-align:right;font-size:11px;color:#111">0.00</div>
<div class="t" style="left:1224px;top:29px;width:106px;text-align:right;font-size:11px;color:#111">1.70</div>
<svg class="abs" style="left:5px;top:49px" width="12" height="16" viewBox="0 0 12 16"><defs><linearGradient id="igs" x1="0" y1="0" x2="0" y2="1"><stop offset="0" stop-color="#fde6dc"/><stop offset="1" stop-color="#fbb9a0"/></linearGradient></defs><path d="M2.4 .65h7.2a1.75 1.75 0 0 1 1.75 1.75v8.6l-4.2 4.35h-4.75a1.75 1.75 0 0 1-1.75-1.75v-11.2a1.75 1.75 0 0 1 1.75-1.75z" fill="url(#igs)" stroke="#e2481c" stroke-width="1.3"/><path d="M11.3 11.2l-4 4.1v-4.100z" fill="#e2481c"/><path d="M3 4.4h6M3 6.9h6M3 9.400h3.600" stroke="#fff" stroke-width="1.100"/></svg>
<div class="t" style="left:21px;top:52px;font-size:11px;color:#111">2023.11.28 15:...</div>
<div class="t" style="left:110px;top:52px;width:105px;text-align:right;font-size:11px;color:#111">34121039</div>
<div class="t" style="left:221px;top:52px;width:105px;text-align:right;font-size:11px;color:#111">sell</div>
<div class="t" style="left:332px;top:52px;width:106px;text-align:right;font-size:11px;color:#111">0.05</div>
<div class="t" style="left:444px;top:52px;width:105px;text-align:right;font-size:11px;color:#111">xauusd</div>
<div class="t" style="left:555px;top:52px;width:106px;text-align:right;font-size:11px;color:#111">2016.75</div>
<div class="t" style="left:674px;top:52px;font-size:11px;color:#111">2023.12.04 01:28:...</div>
<div class="t" style="left:778px;top:52px;width:106px;text-align:right;font-size:11px;color:#111">2128.16</div>
<div class="t" style="left:890px;top:52px;width:105px;text-align:right;font-size:11px;color:#111">0.00</div>
<div class="t" style="left:1001px;top:52px;width:106px;text-align:right;font-size:11px;color:#111">0.00</div>
<div class="t" style="left:1113px;top:52px;width:105px;text-align:right;font-size:11px;color:#111">0.00</div>
<div class="t" style="left:1224px;top:52px;width:106px;text-align:right;font-size:11px;color:#111">-557.05</div>
<svg class="abs" style="left:5px;top:72px" width="12" height="16" viewBox="0 0 12 16"><defs><linearGradient id="igs" x1="0" y1="0" x2="0" y2="1"><stop offset="0" stop-color="#fde6dc"/><stop offset="1" stop-color="#fbb9a0"/></linearGradient></defs><path d="M2.4 .65h7.2a1.75 1.75 0 0 1 1.75 1.75v8.6l-4.2 4.35h-4.75a1.75 1.75 0 0 1-1.75-1.75v-11.2a1.75 1.75 0 0 1 1.75-1.75z" fill="url(#igs)" stroke="#e2481c" stroke-width="1.3"/><path d="M11.3 11.2l-4 4.1v-4.100z" fill="#e2481c"/><path d="M3 4.4h6M3 6.9h6M3 9.400h3.600" stroke="#fff" stroke-width="1.100"/></svg>
<div class="t" style="left:21px;top:75px;font-size:11px;color:#111">2023.11.28 16:...</div>
<div class="t" style="left:110px;top:75px;width:105px;text-align:right;font-size:11px;color:#111">34126512</div>
<div class="t" style="left:221px;top:75px;width:105px;text-align:right;font-size:11px;color:#111">sell</div>
<div class="t" style="left:332px;top:75px;width:106px;text-align:right;font-size:11px;color:#111">0.05</div>
<div class="t" style="left:444px;top:75px;width:105px;text-align:right;font-size:11px;color:#111">xauusd</div>
<div class="t" style="left:555px;top:75px;width:106px;text-align:right;font-size:11px;color:#111">2022.67</div>
<div class="t" style="left:674px;top:75px;font-size:11px;color:#111">2023.12.04 01:28:...</div>
<div class="t" style="left:778px;top:75px;width:106px;text-align:right;font-size:11px;color:#111">2128.81</div>
<div class="t" style="left:890px;top:75px;width:105px;text-align:right;font-size:11px;color:#111">0.00</div>
<div class="t" style="left:1001px;top:75px;width:106px;text-align:right;font-size:11px;color:#111">0.00</div>
<div class="t" style="left:1113px;top:75px;width:105px;text-align:right;font-size:11px;color:#111">0.00</div>
<div class="t" style="left:1224px;top:75px;width:106px;text-align:right;font-size:11px;color:#111">-530.70</div>
<svg class="abs" style="left:5px;top:95px" width="12" height="16" viewBox="0 0 12 16"><defs><linearGradient id="igs" x1="0" y1="0" x2="0" y2="1"><stop offset="0" stop-color="#fde6dc"/><stop offset="1" stop-color="#fbb9a0"/></linearGradient></defs><path d="M2.4 .65h7.2a1.75 1.75 0 0 1 1.75 1.75v8.6l-4.2 4.35h-4.75a1.75 1.75 0 0 1-1.75-1.75v-11.2a1.75 1.75 0 0 1 1.75-1.75z" fill="url(#igs)" stroke="#e2481c" stroke-width="1.3"/><path d="M11.3 11.2l-4 4.1v-4.100z" fill="#e2481c"/><path d="M3 4.4h6M3 6.9h6M3 9.400h3.600" stroke="#fff" stroke-width="1.100"/></svg>
<div class="t" style="left:21px;top:98px;font-size:11px;color:#111">2023.11.28 17:...</div>
<div class="t" style="left:110px;top:98px;width:105px;text-align:right;font-size:11px;color:#111">34152657</div>
<div class="t" style="left:221px;top:98px;width:105px;text-align:right;font-size:11px;color:#111">sell</div>
<div class="t" style="left:332px;top:98px;width:106px;text-align:right;font-size:11px;color:#111">0.05</div>
<div class="t" style="left:444px;top:98px;width:105px;text-align:right;font-size:11px;color:#111">xauusd</div>
<div class="t" style="left:555px;top:98px;width:106px;text-align:right;font-size:11px;color:#111">2029.84</div>
<div class="t" style="left:674px;top:98px;font-size:11px;color:#111">2023.12.04 01:28:...</div>
<div class="t" style="left:778px;top:98px;width:106px;text-align:right;font-size:11px;color:#111">2129.99</div>
<div class="t" style="left:890px;top:98px;width:105px;text-align:right;font-size:11px;color:#111">0.00</div>
<div class="t" style="left:1001px;top:98px;width:106px;text-align:right;font-size:11px;color:#111">0.00</div>
<div class="t" style="left:1113px;top:98px;width:105px;text-align:right;font-size:11px;color:#111">0.00</div>
<div class="t" style="left:1224px;top:98px;width:106px;text-align:right;font-size:11px;color:#111">-500.75</div>
<svg class="abs" style="left:5px;top:118px" width="12" height="16" viewBox="0 0 12 16"><defs><linearGradient id="igs" x1="0" y1="0" x2="0" y2="1"><stop offset="0" stop-color="#fde6dc"/><stop offset="1" stop-color="#fbb9a0"/></linearGradient></defs><path d="M2.4 .65h7.2a1.75 1.75 0 0 1 1.75 1.75v8.6l-4.2 4.35h-4.75a1.75 1.75 0 0 1-1.75-1.75v-11.2a1.75 1.75 0 0 1 1.75-1.75z" fill="url(#igs)" stroke="#e2481c" stroke-width="1.3"/><path d="M11.3 11.2l-4 4.1v-4.100z" fill="#e2481c"/><path d="M3 4.4h6M3 6.9h6M3 9.400h3.600" stroke="#fff" stroke-width="1.100"/></svg>
<div class="t" style="left:21px;top:121px;font-size:11px;color:#111">2023.11.28 19:...</div>
<div class="t" style="left:110px;top:121px;width:105px;text-align:right;font-size:11px;color:#111">34165054</div>
<div class="t" style="left:221px;top:121px;width:105px;text-align:right;font-size:11px;color:#111">sell</div>
<div class="t" style="left:332px;top:121px;width:106px;text-align:right;font-size:11px;color:#111">0.05</div>
<div class="t" style="left:444px;top:121px;width:105px;text-align:right;font-size:11px;color:#111">xauusd</div>
<div class="t" style="left:555px;top:121px;width:106px;text-align:right;font-size:11px;color:#111">2040.10</div>
<div class="t" style="left:674px;top:121px;font-size:11px;color:#111">2023.12.04 01:28:...</div>
<div class="t" style="left:778px;top:121px;width:106px;text-align:right;font-size:11px;color:#111">2131.05</div>
<div class="t" style="left:890px;top:121px;width:105px;text-align:right;font-size:11px;color:#111">0.00</div>
<div class="t" style="left:1001px;top:121px;width:106px;text-align:right;font-size:11px;color:#111">0.00</div>
<div class="t" style="left:1113px;top:121px;width:105px;text-align:right;font-size:11px;color:#111">0.00</div>
<div class="t" style="left:1224px;top:121px;width:106px;text-align:right;font-size:11px;color:#111">-454.75</div>
<svg class="abs" style="left:5px;top:141px" width="12" height="16" viewBox="0 0 12 16"><defs><linearGradient id="igb" x1="0" y1="0" x2="0" y2="1"><stop offset="0" stop-color="#dcecfd"/><stop offset="1" stop-color="#a0cdfb"/></linearGradient></defs><path d="M2.4 .65h7.2a1.75 1.75 0 0 1 1.75 1.75v8.6l-4.2 4.35h-4.75a1.75 1.75 0 0 1-1.75-1.75v-11.2a1.75 1.75 0 0 1 1.75-1.75z" fill="url(#igb)" stroke="#1c78d8" stroke-width="1.3"/><path d="M11.3 11.2l-4 4.1v-4.100z" fill="#1c78d8"/><path d="M3 4.4h6M3 6.9h6M3 9.400h3.600" stroke="#fff" stroke-width="1.100"/></svg>
<div class="t" style="left:21px;top:144px;font-size:11px;color:#111">2023.11.29 05:...</div>
<div class="t" style="left:110px;top:144px;width:105px;text-align:right;font-size:11px;color:#111">34193311</div>
<div class="t" style="left:221px;top:144px;width:105px;text-align:right;font-size:11px;color:#111">buy</div>
<div class="t" style="left:332px;top:144px;width:106px;text-align:right;font-size:11px;color:#111">0.05</div>
<div class="t" style="left:444px;top:144px;width:105px;text-align:right;font-size:11px;color:#111">xauusd</div>
<div class="t" style="left:555px;top:144px;width:106px;text-align:right;font-size:11px;color:#111">2044.68</div>
<div class="t" style="left:674px;top:144px;font-size:11px;color:#111">2023.12.01 11:00:...</div>
<div class="t" style="left:778px;top:144px;width:106px;text-align:right;font-size:11px;color:#111">2044.88</div>
<div class="t" style="left:890px;top:144px;width:105px;text-align:right;font-size:11px;color:#111">0.00</div>
<div class="t" style="left:1001px;top:144px;width:106px;text-align:right;font-size:11px;color:#111">0.00</div>
<div class="t" style="left:1113px;top:144px;width:105px;text-align:right;font-size:11px;color:#111">0.00</div>
<div class="t" style="left:1224px;top:144px;width:106px;text-align:right;font-size:11px;color:#111">1.00</div>
<svg class="abs" style="left:5px;top:164px" width="12" height="16" viewBox="0 0 12 16"><defs><linearGradient id="igb" x1="0" y1="0" x2="0" y2="1"><stop offset="0" stop-color="#dcecfd"/><stop offset="1" stop-color="#a0cdfb"/></linearGradient></defs><path d="M2.4 .65h7.2a1.75 1.75 0 0 1 1.75 1.75v8.6l-4.2 4.35h-4.75a1.75 1.75 0 0 1-1.75-1.75v-11.2a1.75 1.75 0 0 1 1.75-1.75z" fill="url(#igb)" stroke="#1c78d8" stroke-width="1.3"/><path d="M11.3 11.2l-4 4.1v-4.100z" fill="#1c78d8"/><path d="M3 4.4h6M3 6.9h6M3 9.400h3.600" stroke="#fff" stroke-width="1.100"/></svg>
<div class="t" style="left:21px;top:167px;font-size:11px;color:#111">2023.11.30 15:...</div>
<div class="t" style="left:110px;top:167px;width:105px;text-align:right;font-size:11px;color:#111">34337457</div>
<div class="t" style="left:221px;top:167px;width:105px;text-align:right;font-size:11px;color:#111">buy</div>
<div class="t" style="left:332px;top:167px;width:106px;text-align:right;font-size:11px;color:#111">0.02</div>
<div class="t" style="left:444px;top:167px;width:105px;text-align:right;font-size:11px;color:#111">xauusd</div>
<div class="t" style="left:555px;top:167px;width:106px;text-align:right;font-size:11px;color:#111">2038.80</div>
<div class="t" style="left:674px;top:167px;font-size:11px;color:#111">2023.12.01 13:43:...</div>
<div class="t" style="left:778px;top:167px;width:106px;text-align:right;font-size:11px;color:#111">2038.89</div>
<div class="t" style="left:890px;top:167px;width:105px;text-align:right;font-size:11px;color:#111">0.00</div>
<div class="t" style="left:1001px;top:167px;width:106px;text-align:right;font-size:11px;color:#111">0.00</div>
<div class="t" style="left:1113px;top:167px;width:105px;text-align:right;font-size:11px;color:#111">0.00</div>
<div class="t" style="left:1224px;top:167px;width:106px;text-align:right;font-size:11px;color:#111">0.18</div>
<svg class="abs" style="left:5px;top:187px" width="12" height="16" viewBox="0 0 12 16"><defs><linearGradient id="igb" x1="0" y1="0" x2="0" y2="1"><stop offset="0" stop-color="#dcecfd"/><stop offset="1" stop-color="#a0cdfb"/></linearGradient></defs><path d="M2.4 .65h7.2a1.75 1.75 0 0 1 1.75 1.75v8.6l-4.2 4.35h-4.75a1.75 1.75 0 0 1-1.75-1.75v-11.2a1.75 1.75 0 0 1 1.75-1.75z" fill="url(#igb)" stroke="#1c78d8" stroke-width="1.3"/><path d="M11.3 11.2l-4 4.1v-4.100z" fill="#1c78d8"/><path d="M3 4.4h6M3 6.9h6M3 9.400h3.600" stroke="#fff" stroke-width="1.100"/></svg>
<div class="t" style="left:21px;top:190px;font-size:11px;color:#111">2023.11.30 15:...</div>
<div class="t" style="left:110px;top:190px;width:105px;text-align:right;font-size:11px;color:#111">34338874</div>
<div class="t" style="left:221px;top:190px;width:105px;text-align:right;font-size:11px;color:#111">buy</div>
<div class="t" style="left:332px;top:190px;width:106px;text-align:right;font-size:11px;color:#111">0.02</div>
<div class="t" style="left:444px;top:190px;width:105px;text-align:right;font-size:11px;color:#111">xauusd</div>
<div class="t" style="left:555px;top:190px;width:106px;text-align:right;font-size:11px;color:#111">2036.94</div>
<div class="t" style="left:674px;top:190px;font-size:11px;color:#111">2023.12.01 13:40:...</div>
<div class="t" style="left:778px;top:190px;width:106px;text-align:right;font-size:11px;color:#111">2038.33</div>
<div class="t" style="left:890px;top:190px;width:105px;text-align:right;font-size:11px;color:#111">0.00</div>
<div class="t" style="left:1001px;top:190px;width:106px;text-align:right;font-size:11px;color:#111">0.00</div>
<div class="t" style="left:1113px;top:190px;width:105px;text-align:right;font-size:11px;color:#111">0.00</div>
<div class="t" style="left:1224px;top:190px;width:106px;text-align:right;font-size:11px;color:#111">2.78</div>
<svg class="abs" style="left:5px;top:210px" width="12" height="16" viewBox="0 0 12 16"><defs><linearGradient id="igb" x1="0" y1="0" x2="0" y2="1"><stop offset="0" stop-color="#dcecfd"/><stop offset="1" stop-color="#a0cdfb"/></linearGradient></defs><path d="M2.4 .65h7.2a1.75 1.75 0 0 1 1.75 1.75v8.6l-4.2 4.35h-4.75a1.75 1.75 0 0 1-1.75-1.75v-11.2a1.75 1.75 0 0 1 1.75-1.75z" fill="url(#igb)" stroke="#1c78d8" stroke-width="1.3"/><path d="M11.3 11.2l-4 4.1v-4.100z" fill="#1c78d8"/><path d="M3 4.4h6M3 6.9h6M3 9.400h3.600" stroke="#fff" stroke-width="1.100"/></svg>
<div class="t" style="left:21px;top:213px;font-size:11px;color:#111">2023.11.30 16:...</div>
<div class="t" style="left:110px;top:213px;width:105px;text-align:right;font-size:11px;color:#111">34350005</div>
<div class="t" style="left:221px;top:213px;width:105px;text-align:right;font-size:11px;color:#111">buy</div>
<div class="t" style="left:332px;top:213px;width:106px;text-align:right;font-size:11px;color:#111">0.02</div>
<div class="t" style="left:444px;top:213px;width:105px;text-align:right;font-size:11px;color:#111">xauusd</div>
<div class="t" style="left:555px;top:213px;width:106px;text-align:right;font-size:11px;color:#111">2034.05</div>
<div class="t" style="left:674px;top:213px;font-size:11px;color:#111">2023.12.01 13:40:...</div>
<div class="t" style="left:778px;top:213px;width:106px;text-align:right;font-size:11px;color:#111">2038.37</div>
<div class="t" style="left:890px;top:213px;width:105px;text-align:right;font-size:11px;color:#111">0.00</div>
<div class="t" style="left:1001px;top:213px;width:106px;text-align:right;font-size:11px;color:#111">0.00</div>
<div class="t" style="left:1113px;top:213px;width:105px;text-align:right;font-size:11px;color:#111">0.00</div>
<div class="t" style="left:1224px;top:213px;width:106px;text-align:right;font-size:11px;color:#111">8.64</div>
<svg class="abs" style="left:5px;top:233px" width="12" height="16" viewBox="0 0 12 16"><defs><linearGradient id="igb" x1="0" y1="0" x2="0" y2="1"><stop offset="0" stop-color="#dcecfd"/><stop offset="1" stop-color="#a0cdfb"/></linearGradient></defs><path d="M2.4 .65h7.2a1.75 1.75 0 0 1 1.75 1.75v8.6l-4.2 4.35h-4.75a1.75 1.75 0 0 1-1.75-1.75v-11.2a1.75 1.75 0 0 1 1.75-1.75z" fill="url(#igb)" stroke="#1c78d8" stroke-width="1.3"/><path d="M11.3 11.2l-4 4.1v-4.100z" fill="#1c78d8"/><path d="M3 4.4h6M3 6.9h6M3 9.400h3.600" stroke="#fff" stroke-width="1.100"/></svg>
<div class="t" style="left:21px;top:236px;font-size:11px;color:#111">2023.12.01 12:...</div>
<div class="t" style="left:110px;top:236px;width:105px;text-align:right;font-size:11px;color:#111">34423817</div>
<div class="t" style="left:221px;top:236px;width:105px;text-align:right;font-size:11px;color:#111">buy</div>
<div class="t" style="left:332px;top:236px;width:106px;text-align:right;font-size:11px;color:#111">0.02</div>
<div class="t" style="left:444px;top:236px;width:105px;text-align:right;font-size:11px;color:#111">xauusd</div>
<div class="t" style="left:555px;top:236px;width:106px;text-align:right;font-size:11px;color:#111">2042.95</div>
<div class="t" style="left:674px;top:236px;font-size:11px;color:#111">2023.12.04 01:28:...</div>
<div class="t" style="left:778px;top:236px;width:106px;text-align:right;font-size:11px;color:#111">2127.63</div>
<div class="t" style="left:890px;top:236px;width:105px;text-align:right;font-size:11px;color:#111">0.00</div>
<div class="t" style="left:1001px;top:236px;width:106px;text-align:right;font-size:11px;color:#111">0.00</div>
<div class="t" style="left:1113px;top:236px;width:105px;text-align:right;font-size:11px;color:#111">0.00</div>
<div class="t" style="left:1224px;top:236px;width:106px;text-align:right;font-size:11px;color:#111">169.36</div>
</div>
<div class="abs" style="left:1337px;top:396px;width:18px;height:239px;background:#f0f0f0"></div>
<svg class="abs" style="left:1337.5px;top:396px" width="17" height="239"><path d="M5.1 11.4h7.800l-3.900-4.300z M5.1 228h7.800l-3.900 4.300z" fill="#505050"/><rect x="4" y="196" width="10" height="16" fill="#c1c1c1"/></svg>
<div class="abs" style="left:0;top:635px;width:1355px;height:11px;background:#f0f0f0"></div>
<div class="abs" style="left:0;top:635px;width:1355px;height:1px;background:#000"></div>
<div class="abs" style="left:0;top:636px;width:1355px;height:1px;background:#7c7c7c"></div>
<div class="abs" style="left:51px;top:635px;width:56px;height:14px;background:#fff;border-left:1.5px solid #000;border-right:1.5px solid #000"></div>
<div class="t" style="left:11.8px;top:641.6px;font-size:11px;color:#666">Trade</div>
<div class="t" style="left:62.7px;top:641px;font-size:11px;color:#111">History</div>
<div class="t" style="left:119.6px;top:641.6px;font-size:11px;color:#666">Journal</div>
<div class="abs" style="left:855px;top:642px;width:1px;height:4px;background:#888"></div>
<div class="abs" style="left:961px;top:642px;width:1px;height:4px;background:#888"></div>
<div class="abs" style="left:1033px;top:642px;width:1px;height:4px;background:#888"></div>
<div class="abs" style="left:1106px;top:642px;width:1px;height:4px;background:#888"></div>
<div class="abs" style="left:1178px;top:642px;width:1px;height:4px;background:#888"></div>
<div class="abs" style="left:1250px;top:642px;width:1px;height:4px;background:#888"></div>
<svg class="abs" style="left:0;top:0;pointer-events:none" width="1355" height="646" viewBox="0 0 1355 646"><defs><clipPath id="wmc"><rect x="0" y="10" width="1355" height="636"/></clipPath></defs><g fill="#a4a4a4" fill-opacity="0.375" fill-rule="evenodd" clip-path="url(#wmc)"><path transform="translate(103.2 49.2) rotate(-15)" d="M-72-62C-38-57-10-64 0-84C10-64 38-57 72-62C84-10 66 52 0 87C-66 52-84-10-72-62ZM-12.5-40h25v27.5h27.5v25h-27.5v27.5h-25v-27.5h-27.5v-25h27.5z"/><path transform="translate(482.5 -55.5) rotate(-15)" d="M-72-62C-38-57-10-64 0-84C10-64 38-57 72-62C84-10 66 52 0 87C-66 52-84-10-72-62ZM-12.5-40h25v27.5h27.5v25h-27.5v27.5h-25v-27.5h-27.5v-25h27.5z"/><path transform="translate(206.8 435.3) rotate(-15)" d="M-72-62C-38-57-10-64 0-84C10-64 38-57 72-62C84-10 66 52 0 87C-66 52-84-10-72-62ZM-12.5-40h25v27.5h27.5v25h-27.5v27.5h-25v-27.5h-27.5v-25h27.5z"/><path transform="translate(588.4 333.7) rotate(-15)" d="M-72-62C-38-57-10-64 0-84C10-64 38-57 72-62C84-10 66 52 0 87C-66 52-84-10-72-62ZM-12.5-40h25v27.5h27.5v25h-27.5v27.5h-25v-27.5h-27.5v-25h27.5z"/><path transform="translate(968 231.5) rotate(-15)" d="M-72-62C-38-57-10-64 0-84C10-64 38-57 72-62C84-10 66 52 0 87C-66 52-84-10-72-62ZM-12.5-40h25v27.5h27.5v25h-27.5v27.5h-25v-27.5h-27.5v-25h27.5z"/><path transform="translate(1349 131.5) rotate(-15)" d="M-72-62C-38-57-10-64 0-84C10-64 38-57 72-62C84-10 66 52 0 87C-66 52-84-10-72-62ZM-12.5-40h25v27.5h27.5v25h-27.5v27.5h-25v-27.5h-27.5v-25h27.5z"/><path transform="translate(856.7 675) rotate(-15)" d="M-72-62C-38-57-10-64 0-84C10-64 38-57 72-62C84-10 66 52 0 87C-66 52-84-10-72-62ZM-12.5-40h25v27.5h27.5v25h-27.5v27.5h-25v-27.5h-27.5v-25h27.5z"/><path transform="translate(1236.8 573) rotate(-15)" d="M-72-62C-38-57-10-64 0-84C10-64 38-57 72-62C84-10 66 52 0 87C-66 52-84-10-72-62ZM-12.5-40h25v27.5h27.5v25h-27.5v27.5h-25v-27.5h-27.5v-25h27.5z"/></g></svg>
</body></html>
